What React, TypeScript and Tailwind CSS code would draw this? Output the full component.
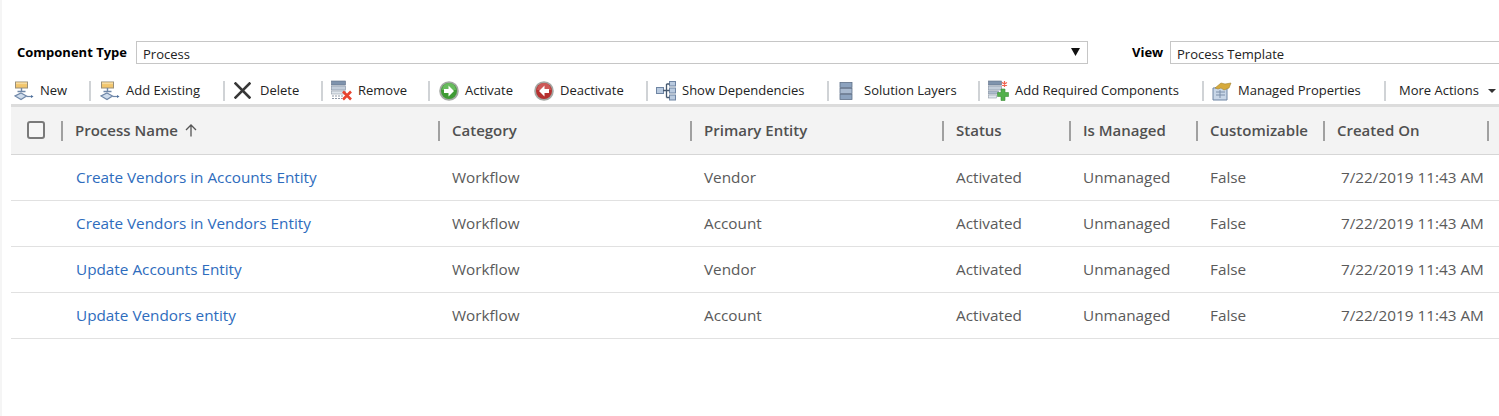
import React from "react";

const font = "font-['Open_Sans','Noto_Sans',sans-serif]";

function IconFlow() {
  return (
    <svg width="20" height="20" viewBox="0 0 20 20">
      <rect x="1.500" y="1" width="12" height="6" fill="#f2c66d" stroke="#9a8f78" />
      <rect x="2" y="1.500" width="11" height="1.600" fill="#f7dc9f" />
      <path d="M7.500 7v3.500M3.500 10.500h8" stroke="#6f87a8" strokeWidth="1.400" fill="none" />
      <path d="M7 12l5.500 3-5.500 3.500L1 15z" fill="#cfdcec" stroke="#6f87a8" strokeWidth="1.200" />
      <path d="M12.500 15.500H18" stroke="#6f87a8" strokeWidth="1.200" />
      <path d="M17 14l2.500 1.500L17 17z" fill="#4d6f9c" />
    </svg>
  );
}
function IconX() {
  return (
    <svg width="17" height="17" viewBox="0 0 17 17">
      <path d="M1.500 1.500l14 14M15.500 1.500l-14 14" stroke="#383838" strokeWidth="2.600" strokeLinecap="square" />
    </svg>
  );
}
function IconRemove() {
  return (
    <svg width="22" height="22" viewBox="0 0 22 22">
      <rect x="0.500" y="1" width="14" height="4" fill="#7f93ad" stroke="#5f6f86" strokeWidth="0.600" />
      <rect x="0.500" y="6" width="14" height="4" fill="#c4cedb" stroke="#7f8c9e" strokeWidth="0.600" />
      <rect x="0.500" y="11" width="14" height="3" fill="#dfe5ec" stroke="#8f9aa8" strokeWidth="0.600" />
      <path d="M1 16h11M1 18.500h10" stroke="#8d97a6" strokeWidth="1.200" strokeDasharray="2 1" />
      <path d="M12 11.500l8 8M20 11.500l-8 8" stroke="#e8432e" strokeWidth="2.600" />
    </svg>
  );
}
function IconCircle({ c1, c2, dir }: { c1: string; c2: string; dir: "r" | "l" }) {
  return (
    <svg width="20" height="20" viewBox="0 0 20 20">
      <circle cx="10" cy="10" r="9.800" fill="#a4a8a4" />
      <circle cx="10" cy="10" r="8" fill={c1} />
      <path d="M3 9a7 7 0 0 1 14 0z" fill={c2} opacity="0.700" />
      {dir === "r" ? (
        <path d="M5 8h4.500V4.500l5.500 5.500-5.500 5.500V12H5z" fill="#fff" />
      ) : (
        <path d="M15 8h-4.500V4.500L5 10l5.500 5.500V12H15z" fill="#fff" />
      )}
    </svg>
  );
}
function IconDeps() {
  return (
    <svg width="20" height="20" viewBox="0 0 20 20">
      <g fill="#b9cadf" stroke="#6f85a3">
        <rect x="0.500" y="6.500" width="7" height="6" />
        <rect x="13.500" y="0.500" width="6" height="4.500" />
        <rect x="13.500" y="7" width="6" height="5" />
        <rect x="13.500" y="14" width="6" height="5" />
      </g>
      <path d="M7 9.500h6.500M10.500 3v13.500M10.500 3h3M10.500 16.500h3" stroke="#46596f" strokeWidth="1.300" fill="none" />
    </svg>
  );
}
function IconLayers() {
  return (
    <svg width="14" height="20" viewBox="0 0 14 20">
      <g stroke="#5f7088" strokeWidth="0.800">
        <rect x="1" y="1.500" width="12" height="5" fill="#8da3bf" />
        <rect x="1" y="7.500" width="12" height="5" fill="#a9bad0" />
        <rect x="1" y="13.500" width="12" height="5" fill="#8da3bf" />
      </g>
    </svg>
  );
}
function IconRequired() {
  return (
    <svg width="21" height="21" viewBox="0 0 21 21">
      <rect x="0.500" y="1" width="13" height="4" fill="#7f93ad" stroke="#5f6f86" strokeWidth="0.600" />
      <rect x="0.500" y="6" width="13" height="4" fill="#c4cedb" stroke="#7f8c9e" strokeWidth="0.600" />
      <rect x="0.500" y="11" width="10" height="3" fill="#aebccd" stroke="#7f8c9e" strokeWidth="0.600" />
      <rect x="0.500" y="15" width="8" height="3" fill="#dfe5ec" stroke="#8f9aa8" strokeWidth="0.600" />
      <path d="M16.500 1v6M14 2.500l5 3M19 2.500l-5 3" stroke="#f0624f" strokeWidth="1.200" />
      <path d="M13 9h4v3.500h3.500v4H17V20.500h-4V16.500H9.500v-4H13z" fill="#52b04b" stroke="#3c8f39" strokeWidth="0.600" />
    </svg>
  );
}
function IconManaged() {
  return (
    <svg width="20" height="20" viewBox="0 0 20 20">
      <path d="M1 7l14-1v13H1z" fill="#c8d6e7" stroke="#6f85a3" />
      <path d="M4 11h9M4 14h9M8 9v8" stroke="#7c90aa" />
      <path d="M3 7l6-5 4 1 6-1-2 5-5 2-3-2-3 1z" fill="#d6aa3c" stroke="#a5842f" strokeWidth="0.600" />
    </svg>
  );
}

const tools = [
  { label: "New", icon: <IconFlow />, w: "w-[79px] pl-[2px]", gap: "w-[26px]" },
  { label: "Add Existing", icon: <IconFlow />, w: "w-[134px] pl-[9px]", gap: "w-[26px]" },
  { label: "Delete", icon: <IconX />, w: "w-[98px] pl-[9px]", gap: "w-[26px]" },
  { label: "Remove", icon: <IconRemove />, w: "w-[107px] pl-[8px]", gap: "w-[27px]" },
  { label: "Activate", icon: <IconCircle c1="#3f9a35" c2="#79c96f" dir="r" />, w: "w-[95px] pl-[9px]", gap: "w-[26px]", nosep: true },
  { label: "Deactivate", icon: <IconCircle c1="#b5302f" c2="#d76a68" dir="l" />, w: "w-[123px] pl-[9px]", gap: "w-[26px]" },
  { label: "Show Dependencies", icon: <IconDeps />, w: "w-[181px] pl-[8px]", gap: "w-[26px]" },
  { label: "Solution Layers", icon: <IconLayers />, w: "w-[151px] pl-[10px]", gap: "w-[25px]" },
  { label: "Add Required Components", icon: <IconRequired />, w: "w-[224px] pl-[8px]", gap: "w-[27px]" },
  { label: "Managed Properties", icon: <IconManaged />, w: "w-[182px] pl-[8px]", gap: "w-[26px]" },
];

const cols = [
  { name: "Process Name", w: "w-[377px]" },
  { name: "Category", w: "w-[252px]" },
  { name: "Primary Entity", w: "w-[252px]" },
  { name: "Status", w: "w-[127px]" },
  { name: "Is Managed", w: "w-[127px]" },
  { name: "Customizable", w: "w-[127px]" },
  { name: "Created On", w: "w-[164px]" },
];

const rows = [
  ["Create Vendors in Accounts Entity", "Vendor"],
  ["Create Vendors in Vendors Entity", "Account"],
  ["Update Accounts Entity", "Vendor"],
  ["Update Vendors entity", "Account"],
];

export default function App() {
  return (
    <div className={`${font} w-[1499px] h-[416px] overflow-hidden bg-white text-[13px] text-[#222] border-l-2 border-[#f5f5f5]`}>
      <div className="flex items-center h-[23px] mt-[41px] ml-[15px]">
        <span className="w-[119px] shrink-0 font-bold text-[13px] text-black whitespace-nowrap">Component Type</span>
        <div className="relative flex items-center shrink-0 w-[952px] h-[23px] border border-[#c6c6c6] pl-1.5 pt-[4px] text-[#222]">
          Process
          <svg className="absolute right-[7px] top-[6px]" width="9" height="8" viewBox="0 0 9 8">
            <path d="M0 0h9L4.500 8z" fill="#111" />
          </svg>
        </div>
        <span className="ml-[44px] w-[38px] shrink-0 font-bold text-black">View</span>
        <div className="flex items-center w-[340px] h-[23px] border border-[#c6c6c6] border-r-0 pl-1.5 pt-[4px] shrink-0">
          Process Template
        </div>
      </div>

      <div className="flex items-center h-[25px] mt-[14px] ml-[10px]">
        {tools.map((t) => (
          <div key={t.label} className={`flex items-center shrink-0 ${t.w}`}>
            <span className={`${t.gap} flex items-center shrink-0`}>{t.icon}</span>
            <span className="whitespace-nowrap">{t.label}</span>
            {!t.nosep && <span className="w-0.5 h-5 bg-[#d0d3d6] ml-auto" />}
          </div>
        ))}
        <span className="ml-[13px] whitespace-nowrap">More Actions</span>
        <svg className="ml-[9px]" width="8" height="4" viewBox="0 0 8 4">
          <path d="M0 0h8L4 4z" fill="#333" />
        </svg>
      </div>

      <div className="ml-[9px] mt-[1px]">
        <div className="flex items-center h-[51px] bg-[#f3f3f3] border-t-[3px] border-b border-t-[#dcdcdc] border-b-[#d6d6d6]">
          <div className="w-[50px] shrink-0 flex pl-[16px]">
            <span className="w-[18px] h-[18px] mb-0.5 rounded-[3px] border-2 border-[#7a7a7a] bg-[#f6f6f6]" />
          </div>
          {cols.map((c) => (
            <div key={c.name} className={`${c.w} shrink-0 h-5 border-l-2 border-[#a0a0a0] pl-[12px] flex items-center font-semibold text-[15px] text-[#505050] whitespace-nowrap`}>
              {c.name}
              {c.name === "Process Name" && (
                <svg className="ml-[7px]" width="12" height="13" viewBox="0 0 12 13">
                  <path d="M6 12.500V1M1 6l5-5 5 5" stroke="#555" strokeWidth="1.300" fill="none" />
                </svg>
              )}
            </div>
          ))}
          <div className="h-5 border-l-2 border-[#a0a0a0]" />
        </div>
        {rows.map(([name, entity]) => (
          <div key={name} className="flex items-center h-[46px] border-b border-[#e1e1e1] text-[15.300px] text-[#5a5a5a] whitespace-nowrap">
            <div className="w-[65px] shrink-0" />
            <div className="w-[376px] shrink-0 text-[#2e6cbd]">{name}</div>
            <div className="w-[252px] shrink-0">Workflow</div>
            <div className="w-[252px] shrink-0">{entity}</div>
            <div className="w-[127px] shrink-0">Activated</div>
            <div className="w-[127px] shrink-0">Unmanaged</div>
            <div className="w-[131px] shrink-0">False</div>
            <div className="shrink-0">7/22/2019 11:43 AM</div>
          </div>
        ))}
      </div>
    </div>
  );
}
